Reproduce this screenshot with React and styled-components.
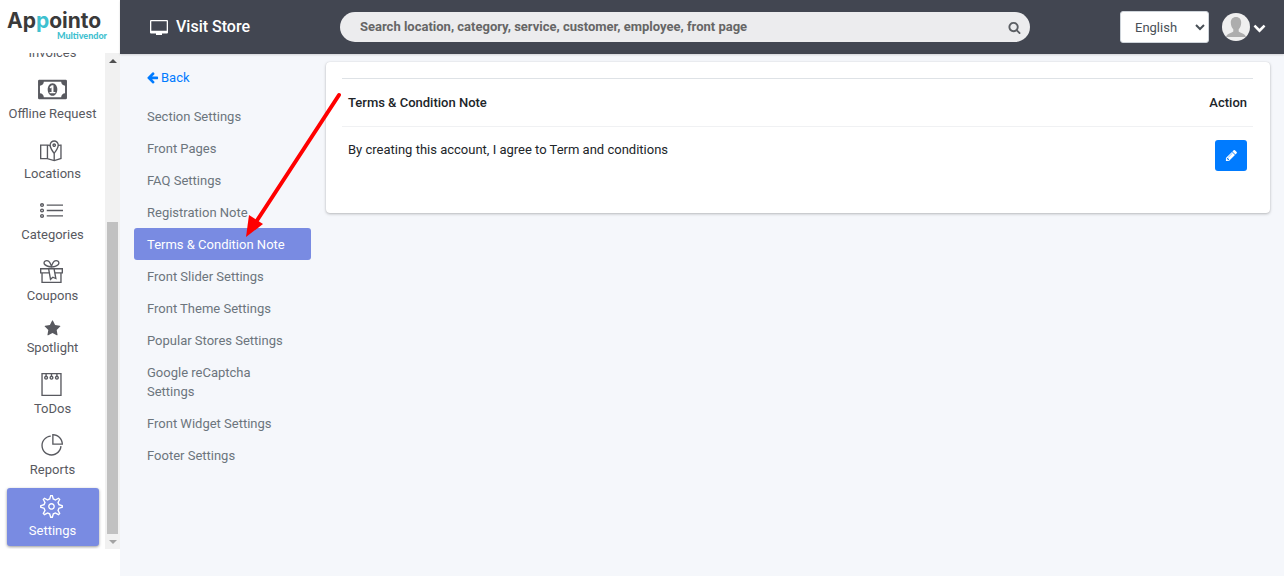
import React, { useState } from 'react';
import styled, { createGlobalStyle, css } from 'styled-components';
import { TfiGift, TfiList, TfiMapAlt, TfiNotepad, TfiPieChart, TfiSettings } from 'react-icons/tfi';

const GlobalStyle = createGlobalStyle`
  *,
  *::before,
  *::after {
    box-sizing: border-box;
  }

  body {
    margin: 0;
    background-color: #f5f7fb;
    color: #212529;
    font-family: Roboto, sans-serif;
    font-size: 13px;
    line-height: 19px;
  }

  a {
    text-decoration: none;
  }
`;

const StyledPage = styled.div`
  position: relative;
  display: flex;
  min-height: 100vh;
`;

const StyledSidebar = styled.aside`
  display: flex;
  flex-direction: column;
  flex: 0 0 120px;
  height: 100vh;
  background-color: #fff;
`;

const Logo = styled.a`
  display: flex;
  flex-direction: column;
  flex: 0 0 53px;
  padding: 10px 13px 0 7px;
  color: #3a3a3a;
  font-family: Inter, sans-serif;
  font-size: 21px;
  font-weight: 700;
  line-height: 21px;

  .accent {
    color: #3fc1d0;
  }

  small {
    align-self: flex-end;
    color: #3fc1d0;
    font-family: Lato, sans-serif;
    font-size: 9px;
    font-weight: 900;
    line-height: 9px;
  }
`;

const MenuWrap = styled.div`
  display: flex;
  height: calc(100vh - 80px);
`;

const Menu = styled.nav`
  display: flex;
  flex-direction: column;
  flex: 1;
  justify-content: flex-end;
  gap: 3px;
  padding: 0 6px 3px 7px;
  overflow: hidden;
`;

const MenuItem = styled.a`
  display: flex;
  flex-direction: column;
  flex-shrink: 0;
  align-items: center;
  padding: 6px 1px 3px 0;
  border-radius: 3px;
  color: #58595f;
  line-height: 24px;
  white-space: nowrap;

  ${({ $active }) =>
    $active &&
    css`
      background-color: #798be2;
      color: #fff;
      box-shadow: 0 1px 3px rgba(0, 0, 0, 0.4);
    `}
`;

const MenuIcon = styled.span`
  display: flex;
  align-items: center;
  justify-content: center;
  height: ${({ $height }) => $height}px;
  padding-right: ${({ $outline }) => ($outline ? 3 : 0)}px;
`;

const ScrollTrack = styled.div`
  display: flex;
  flex-direction: column;
  align-items: center;
  width: 15px;
  background-color: #f1f1f1;

  &::before,
  &::after {
    content: '';
    width: 0;
    margin: 6px 0 5px;
    border: 4px solid transparent;
    border-top: 0;
    border-bottom-color: #505050;
  }

  &::after {
    border-top: 4px solid #a3a3a3;
    border-bottom: 0;
  }
`;

const ScrollThumb = styled.div`
  flex: 0 0 63%;
  width: 11px;
  margin-top: auto;
  background-color: #c1c1c1;
`;

const StyledMain = styled.div`
  flex: 1;
  min-width: 0;
`;

const StyledHeader = styled.header`
  display: flex;
  align-items: center;
  height: 54px;
  padding: 0 18px 0 30px;
  background-color: #424651;
  box-shadow: 0 1px 2px rgba(0, 0, 0, 0.15);
`;

const StoreLink = styled.a`
  display: flex;
  align-items: center;
  gap: 8px;
  flex: 0 0 190px;
  padding-bottom: 2px;
  color: #fff;
  font-size: 16px;
  font-weight: 500;

  svg {
    margin-top: 3px;
  }
`;

const SearchForm = styled.form`
  display: flex;
  align-items: center;
  flex: 1;
  height: 30px;
  margin-right: 90px;
  padding: 0 9px 0 20px;
  border-radius: 15px;
  background-color: #ececee;

  input {
    flex: 1;
    padding: 0 0 2px;
    border: 0;
    outline: none;
    background: transparent;
    color: #666;
    font: inherit;
    font-weight: 700;

    &::placeholder {
      color: #666;
      opacity: 1;
    }
  }

  button {
    display: flex;
    padding: 0;
    border: 0;
    background: transparent;
    color: #5c5f64;
    cursor: pointer;
  }
`;

const LanguageSelect = styled.select`
  width: 89px;
  height: 32px;
  padding: 0 0 0 10px;
  border: 1px solid #ced4da;
  border-radius: 3px;
  background-color: #fff;
  color: #495057;
  font: inherit;
`;

const ProfileButton = styled.button`
  display: flex;
  align-items: center;
  gap: 3px;
  margin-left: 13px;
  padding: 0;
  border: 0;
  background: transparent;
  color: #fff;
  cursor: pointer;
`;

const Content = styled.div`
  display: grid;
  grid-template-columns: 177px 1fr;
  align-items: start;
  gap: 15px;
  padding: 8px 14px;
`;

const SettingsNav = styled.nav`
  display: flex;
  flex-direction: column;
  padding-top: 6px;
`;

const BackLink = styled.a`
  display: flex;
  align-items: center;
  gap: 2px;
  margin-bottom: 13px;
  padding-left: 12px;
  color: #007bff;
`;

const SettingsLink = styled.a`
  padding: 7px 13px 6px;
  border-radius: 3px;
  background-color: ${({ $active }) => ($active ? '#798be2' : 'transparent')};
  color: ${({ $active }) => ($active ? '#fff' : '#6c757d')};
`;

const Card = styled.section`
  padding: 16px 17px 42px 16px;
  border-radius: 4px;
  background-color: #fff;
  box-shadow: 0 0 1px rgba(0, 0, 0, 0.13), 0 1px 3px rgba(0, 0, 0, 0.25);
`;

const NoteTable = styled.table`
  width: 100%;
  border-collapse: collapse;

  th {
    height: 48px;
    padding: 0 6px;
    border-top: 1px solid #dee2e6;
    border-bottom: 1px solid #f0f1f3;
    font-weight: 500;
    text-align: left;
  }

  td {
    padding: 13px 6px 0;
    vertical-align: top;
  }

  th:last-child,
  td:last-child {
    text-align: right;
  }
`;

const EditButton = styled.button`
  display: inline-flex;
  align-items: center;
  justify-content: center;
  width: 32px;
  height: 31px;
  padding: 0;
  border: 0;
  border-radius: 3px;
  background-color: #007bff;
  color: #fff;
  cursor: pointer;
`;

// Pointer drawn over the page, from the card to the selected settings link
const Pointer = styled.svg`
  position: absolute;
  top: 90px;
  left: 244px;
  pointer-events: none;
`;

const glyphs = {
  star: 'M1728 647q0 22-26 48l-363 354 86 500q1 7 1 20 0 21-10.5 35.5t-30.5 14.5q-19 0-40-12l-449-236-449 236q-22 12-40 12-21 0-31.5-14.5t-10.5-35.5q0-6 2-20l86-500-364-354q-25-27-25-48 0-37 56-46l502-73 225-455q19-41 49-41t49 41l225 455 502 73q56 9 56 46z',
  search:
    'M1216 832q0-185-131.5-316.5t-316.5-131.5-316.5 131.5-131.5 316.5 131.5 316.5 316.5 131.5 316.5-131.5 131.5-316.5zm512 832q0 52-38 90t-90 38q-54 0-90-38l-343-342q-179 124-399 124-143 0-273.5-55.5t-225-150-150-225-55.5-273.5 55.5-273.5 150-225 225-150 273.5-55.5 273.5 55.5 225 150 150 225 55.5 273.5q0 220-124 399l343 343q37 37 37 90z',
  chevron:
    'M1683 808l-742 741q-19 19-45 19t-45-19l-742-741q-19-19-19-45.5t19-45.5l166-165q19-19 45-19t45 19l531 531 531-531q19-19 45-19t45 19l166 165q19 19 19 45.5t-19 45.5z',
  arrowLeft:
    'M1664 896v128q0 53-32.5 90.5t-84.5 37.5h-704l293 294q38 36 38 90t-38 90l-75 76q-37 37-90 37-52 0-91-37l-651-652q-37-37-37-90 0-52 37-91l651-650q38-38 91-38 52 0 90 38l75 74q38 38 38 91t-38 91l-293 293h704q52 0 84.5 37.5t32.5 90.5z',
  pencil:
    'M491 1536l91-91-235-235-91 91v107h128v128h107zm523-928q0-22-22-22-10 0-17 7l-542 542q-7 7-7 17 0 22 22 22 10 0 17-7l542-542q7-7 7-17zm-54-192l416 416-832 832h-416v-416zm683 96q0 53-37 90l-166 166-416-416 166-165q36-38 90-38 53 0 91 38l235 234q37 39 37 91z',
};

const Glyph = ({ name, size = 13 }) => (
  <svg width={size} height={size} viewBox="0 0 1792 1792" fill="currentColor" aria-hidden="true">
    <path d={glyphs[name]} />
  </svg>
);

const MoneyIcon = () => (
  <svg width="29" height="27" viewBox="0 0 1920 1792" fill="currentColor" aria-hidden="true">
    <path d="M768 1152h384v-96h-128v-448h-114l-148 137 77 80q42-37 55-57h2v288h-128v96zm512-256q0 70-21 142t-59.5 134-101.5 101-138 39-138-39-101.5-101-59.5-134-21-142 21-142 59.5-134 101.5-101 138-39 138 39 101.5 101 59.5 134 21 142zm512 256v-512q-106 0-181-75t-75-181h-1152q0 106-75 181t-181 75v512q106 0 181 75t75 181h1152q0-106 75-181t181-75zm128-832v1152q0 26-19 45t-45 19h-1792q-26 0-45-19t-19-45v-1152q0-26 19-45t45-19h1792q26 0 45 19t19 45z" />
  </svg>
);

const DesktopIcon = () => (
  <svg width="18" height="16" viewBox="0 0 18 16" fill="currentColor" aria-hidden="true">
    <path
      fillRule="evenodd"
      d="M1 0h16a1 1 0 0 1 1 1v11.500a1 1 0 0 1-1 1h-5V15H6v-1.500H1a1 1 0 0 1-1-1V1a1 1 0 0 1 1-1zM1.300 1.300v9.400h15.400V1.300z"
    />
  </svg>
);

const Avatar = () => (
  <svg width="28" height="28" viewBox="0 0 28 28" aria-hidden="true">
    <circle cx="14" cy="14" r="14" fill="#efefef" />
    <path
      d="M14 4c-3.400 0-5.300 2.400-5.200 5.800.1 2.700 1 5 2.500 6.400v2.300c-1.500 1.500-6.300 1.700-7.300 5.500h20c-1-3.800-5.800-4-7.300-5.500v-2.300c1.500-1.400 2.400-3.700 2.500-6.400C19.300 6.400 17.400 4 14 4z"
      fill="#adadad"
    />
  </svg>
);

const menuItems = [
  { label: 'Invoices', icon: null, height: 25 },
  { label: 'Offline Request', icon: <MoneyIcon />, height: 25 },
  { label: 'Locations', icon: <TfiMapAlt size={23} />, height: 24, outline: true },
  { label: 'Categories', icon: <TfiList size={23} />, height: 25, outline: true },
  { label: 'Coupons', icon: <TfiGift size={23} />, height: 25, outline: true },
  { label: 'Spotlight', icon: <Glyph name="star" size={17} />, height: 16 },
  { label: 'ToDos', icon: <TfiNotepad size={23} />, height: 25, outline: true },
  { label: 'Reports', icon: <TfiPieChart size={23} />, height: 25, outline: true },
  { label: 'Settings', icon: <TfiSettings size={23} />, height: 25, outline: true },
];

const settingsLinks = [
  'Section Settings',
  'Front Pages',
  'FAQ Settings',
  'Registration Note',
  'Terms & Condition Note',
  'Front Slider Settings',
  'Front Theme Settings',
  'Popular Stores Settings',
  'Google reCaptcha Settings',
  'Front Widget Settings',
  'Footer Settings',
];

const Sidebar = () => (
  <StyledSidebar>
    <Logo href="#">
      <span>
        Ap<span className="accent">p</span>ointo
      </span>
      <small>Multivendor</small>
    </Logo>
    <MenuWrap>
      <Menu>
        {menuItems.map(({ label, icon, height, outline }) => (
          <MenuItem key={label} href="#" $active={label === 'Settings'}>
            <MenuIcon $height={height} $outline={outline}>
              {icon}
            </MenuIcon>
            {label}
          </MenuItem>
        ))}
      </Menu>
      <ScrollTrack>
        <ScrollThumb />
      </ScrollTrack>
    </MenuWrap>
  </StyledSidebar>
);

const Header = () => (
  <StyledHeader>
    <StoreLink href="#">
      <DesktopIcon />
      Visit Store
    </StoreLink>
    <SearchForm onSubmit={e => e.preventDefault()}>
      <input
        type="text"
        aria-label="Search"
        placeholder="Search location, category, service, customer, employee, front page"
      />
      <button type="submit" aria-label="Submit search">
        <Glyph name="search" />
      </button>
    </SearchForm>
    <LanguageSelect aria-label="Language" defaultValue="en">
      <option value="en">English</option>
    </LanguageSelect>
    <ProfileButton type="button" aria-label="Profile menu">
      <Avatar />
      <Glyph name="chevron" />
    </ProfileButton>
  </StyledHeader>
);

const App = () => {
  const [activeLink, setActiveLink] = useState('Terms & Condition Note');

  return (
    <>
      <GlobalStyle />
      <StyledPage>
        <Sidebar />
        <StyledMain>
          <Header />
          <Content>
            <SettingsNav>
              <BackLink href="#">
                <Glyph name="arrowLeft" />
                Back
              </BackLink>
              {settingsLinks.map(label => (
                <SettingsLink
                  key={label}
                  href="#"
                  $active={label === activeLink}
                  onClick={() => setActiveLink(label)}>
                  {label}
                </SettingsLink>
              ))}
            </SettingsNav>

            <Card>
              <NoteTable>
                <thead>
                  <tr>
                    <th>Terms &amp; Condition Note</th>
                    <th>Action</th>
                  </tr>
                </thead>
                <tbody>
                  <tr>
                    <td>By creating this account, I agree to Term and conditions</td>
                    <td>
                      <EditButton type="button" aria-label="Edit">
                        <Glyph name="pencil" />
                      </EditButton>
                    </td>
                  </tr>
                </tbody>
              </NoteTable>
            </Card>
          </Content>
        </StyledMain>
        <Pointer width="100" height="150" viewBox="0 0 100 150" aria-hidden="true">
          <path d="M95 5L12 132" stroke="#f00" strokeWidth="4" strokeLinecap="round" />
          <path d="M2 147L5 125L19 134z" fill="#f00" />
        </Pointer>
      </StyledPage>
    </>
  );
};

export default App;
